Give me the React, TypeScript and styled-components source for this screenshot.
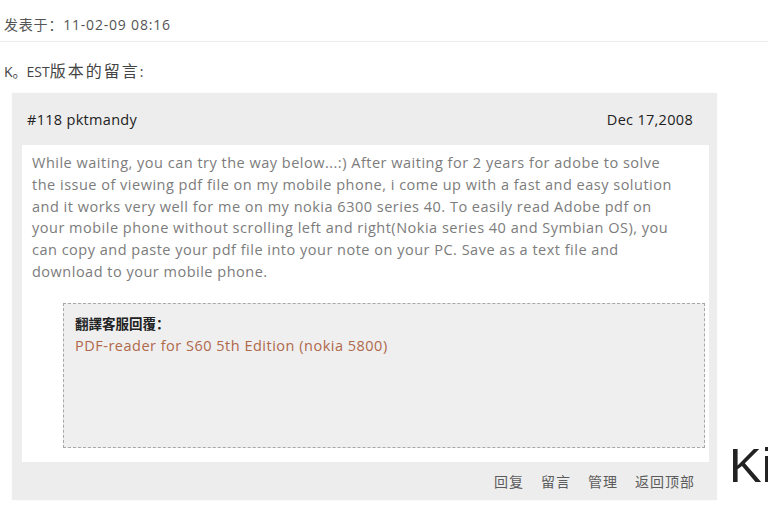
import React from 'react'
import styled, { createGlobalStyle } from 'styled-components'

const GlobalStyle = createGlobalStyle`
  body {
    margin: 0;
    background: #fff;
    font-family: "Open Sans", "Noto Sans CJK SC", sans-serif;
    overflow: hidden;
  }
`

const Page = styled.div`
  width: 768px;
  height: 510px;
  overflow: hidden;
`

const Meta = styled.div`
  height: 42px;
  box-sizing: border-box;
  padding: 14px 0 0 4px;
  font-size: 14px;
  letter-spacing: 0.8px;
  color: #555;
  border-bottom: 1px solid #ececec;
`

const Title = styled.div`
  padding: 19px 0 0 4px;
  height: 51px;
  box-sizing: border-box;
  font-size: 14px;
  line-height: 20px;
  color: #444;
`

const Han = styled.span`
  font-size: 16px;
  letter-spacing: 2px;
`

const Row = styled.div`
  display: flex;
  align-items: flex-end;
  gap: 12px;
  padding-left: 12px;
`

const Card = styled.div`
  width: 705px;
  flex: none;
  background: #ededed;
  box-shadow: 0 0 1px rgba(0, 0, 0, 0.08);
`

const CardHead = styled.div`
  height: 52px;
  display: flex;
  align-items: center;
  justify-content: space-between;
  padding: 0 24px 0 15px;
  font-size: 14.5px;
  letter-spacing: 0.3px;
  color: #222;
`

const Body = styled.div`
  margin: 0 8px 0 10px;
  background: #fff;
  padding: 7px 0 14px 10px;
`

const Text = styled.p`
  margin: 0;
  font-size: 14.5px;
  letter-spacing: 0.5px;
  line-height: 21.8px;
  color: #7c7c7c;
  white-space: nowrap;
`

const Reply = styled.div`
  margin: 20px 4px 0 31px;
  height: 145px;
  box-sizing: border-box;
  border: 1px dashed #a8a8a8;
  background: #efefef;
  padding: 10px 11px;
  line-height: 21px;
`

const ReplyLabel = styled.div`
  font-weight: bold;
  color: #222;
  font-size: 13.5px;
`

const ReplyLink = styled.div`
  color: #b0684a;
  font-size: 14.5px;
  letter-spacing: 0.5px;
`

const Actions = styled.div`
  height: 38px;
  display: flex;
  align-items: center;
  justify-content: flex-end;
  gap: 17px;
  padding-right: 22px;
  font-size: 14px;
  letter-spacing: 1px;
  color: #5c5c5c;
`

const Big = styled.div`
  font-family: "Liberation Sans", Arial, sans-serif;
  font-size: 49px;
  line-height: 1;
  color: #222;
  white-space: nowrap;
  margin-bottom: 10px;
`

export default function App() {
  return (
    <Page>
      <GlobalStyle />
      <Meta>发表于：11-02-09 08:16</Meta>
      <Title>
        K。EST<Han>版本的留言</Han>:
      </Title>
      <Row>
        <Card>
          <CardHead>
            <span>#118 pktmandy</span>
            <span>Dec 17,2008</span>
          </CardHead>
          <Body>
            <Text>
              While waiting, you can try the way below...:) After waiting for 2 years for adobe to solve
              <br />
              the issue of viewing pdf file on my mobile phone, i come up with a fast and easy solution
              <br />
              and it works very well for me on my nokia 6300 series 40. To easily read Adobe pdf on
              <br />
              your mobile phone without scrolling left and right(Nokia series 40 and Symbian OS), you
              <br />
              can copy and paste your pdf file into your note on your PC. Save as a text file and
              <br />
              download to your mobile phone.
            </Text>
            <Reply>
              <ReplyLabel>翻譯客服回覆：</ReplyLabel>
              <ReplyLink>PDF-reader for S60 5th Edition (nokia 5800)</ReplyLink>
            </Reply>
          </Body>
          <Actions>
            <span>回复</span>
            <span>留言</span>
            <span>管理</span>
            <span>返回顶部</span>
          </Actions>
        </Card>
        <Big>Ki</Big>
      </Row>
    </Page>
  )
}
